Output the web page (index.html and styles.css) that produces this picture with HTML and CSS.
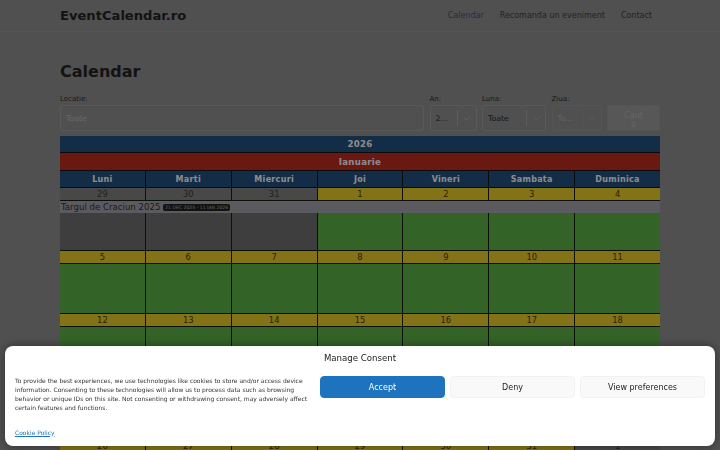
FILE: index.html
```html
<!DOCTYPE html>
<html lang="ro">
<head>
<meta charset="utf-8">
<title>Calendar - EventCalendar.ro</title>
<link rel="stylesheet" href="styles.css">
</head>
<body>
<header class="site-header">
  <div class="container header-inner">
    <a class="logo" href="#">EventCalendar.ro</a>
    <nav class="main-nav">
      <a class="active" href="#">Calendar</a>
      <a href="#">Recomanda un eveniment</a>
      <a href="#">Contact</a>
    </nav>
  </div>
</header>

<main class="container">
  <h1 class="page-title">Calendar</h1>

  <form class="filters">
    <div class="field">
      <label>Locatie:</label>
      <div class="input">Toate</div>
    </div>
    <div class="field">
      <label>An:</label>
      <div class="select"><span class="select-value">2...</span><span class="select-arrow"><svg viewBox="0 0 8 5" width="7" height="5"><path d="M0.5 0.5 L4 4 L7.5 0.5" fill="none" stroke="currentColor" stroke-width="1"/></svg></span></div>
    </div>
    <div class="field">
      <label>Luna:</label>
      <div class="select"><span class="select-value dark">Toate</span><span class="select-arrow"><svg viewBox="0 0 8 5" width="7" height="5"><path d="M0.5 0.5 L4 4 L7.5 0.5" fill="none" stroke="currentColor" stroke-width="1"/></svg></span></div>
    </div>
    <div class="field">
      <label>Ziua:</label>
      <div class="select disabled"><span class="select-value">To...</span><span class="select-arrow"><svg viewBox="0 0 8 5" width="7" height="5"><path d="M0.5 0.5 L4 4 L7.5 0.5" fill="none" stroke="currentColor" stroke-width="1"/></svg></span></div>
    </div>
    <div class="field">
      <label>&nbsp;</label>
      <button type="button" class="search-btn">Cauta</button>
    </div>
  </form>

  <div class="calendar">
    <div class="cal-year">2026</div>
    <div class="cal-month">Ianuarie</div>
    <div class="cal-weekdays">
      <div>Luni</div><div>Marti</div><div>Miercuri</div><div>Joi</div><div>Vineri</div><div>Sambata</div><div>Duminica</div>
    </div>

    <div class="week">
      <div class="num other">29</div><div class="num other">30</div><div class="num other">31</div><div class="num">1</div><div class="num">2</div><div class="num">3</div><div class="num">4</div>
      <div class="day other"></div><div class="day other"></div><div class="day other"></div><div class="day"></div><div class="day"></div><div class="day"></div><div class="day"></div>
      <div class="event-bar">Targul de Craciun 2025 <span class="event-date">21 DEC 2025 - 11 IAN 2026</span></div>
    </div>

    <div class="week">
      <div class="num">5</div><div class="num">6</div><div class="num">7</div><div class="num">8</div><div class="num">9</div><div class="num">10</div><div class="num">11</div>
      <div class="day"></div><div class="day"></div><div class="day"></div><div class="day"></div><div class="day"></div><div class="day"></div><div class="day"></div>
    </div>

    <div class="week">
      <div class="num">12</div><div class="num">13</div><div class="num">14</div><div class="num">15</div><div class="num">16</div><div class="num">17</div><div class="num">18</div>
      <div class="day"></div><div class="day"></div><div class="day"></div><div class="day"></div><div class="day"></div><div class="day"></div><div class="day"></div>
    </div>

    <div class="week">
      <div class="num">19</div><div class="num">20</div><div class="num">21</div><div class="num">22</div><div class="num">23</div><div class="num">24</div><div class="num">25</div>
      <div class="day"></div><div class="day"></div><div class="day"></div><div class="day"></div><div class="day"></div><div class="day"></div><div class="day"></div>
    </div>

    <div class="week">
      <div class="num">26</div><div class="num">27</div><div class="num">28</div><div class="num">29</div><div class="num">30</div><div class="num">31</div><div class="num other">1</div>
      <div class="day"></div><div class="day"></div><div class="day"></div><div class="day"></div><div class="day"></div><div class="day"></div><div class="day other"></div>
    </div>
  </div>
</main>

<div class="backdrop"></div>

<div class="consent" role="dialog" aria-label="Manage Consent">
  <div class="consent-title">Manage Consent</div>
  <p class="consent-message">To provide the best experiences, we use technologies like cookies to store and/or access device information. Consenting to these technologies will allow us to process data such as browsing behavior or unique IDs on this site. Not consenting or withdrawing consent, may adversely affect certain features and functions.</p>
  <div class="consent-buttons">
    <button type="button" class="btn btn-accept">Accept</button>
    <button type="button" class="btn">Deny</button>
    <button type="button" class="btn">View preferences</button>
  </div>
  <div class="consent-links"><a href="#">Cookie Policy</a></div>
</div>
</body>
</html>
```

FILE: styles.css
```css
* { box-sizing: border-box; }

html, body {
  margin: 0;
  padding: 0;
}

body {
  font-family: "DejaVu Sans", "Noto Sans", sans-serif;
  background: #929292;
  color: #242424;
}

a { text-decoration: none; color: inherit; }

.container {
  width: 600px;
  margin: 0 auto;
}

/* top bar */
.site-header {
  border-bottom: 1px solid #9c9c9c;
}

.header-inner {
  height: 31px;
  display: flex;
  align-items: center;
  justify-content: space-between;
}

.logo {
  font-size: 13.1px;
  font-weight: bold;
  color: #242424;
}

.main-nav {
  display: flex;
  gap: 16px;
  font-size: 8px;
  padding-right: 8px;
}

.main-nav a { color: #404040; }
.main-nav a.active { color: #3a5680; }

/* heading */
.page-title {
  margin: 30px 0 0;
  font-size: 16px;
  line-height: 20px;
  font-weight: bold;
  color: #242424;
}

/* filter form */
.filters {
  margin-top: 13px;
  display: grid;
  grid-template-columns: 364px 47px 64px 50px 53px;
  column-gap: 5.5px;
}

.field label {
  display: block;
  font-size: 7px;
  line-height: 9px;
  height: 9px;
  margin-bottom: 1px;
  color: #2e2e2e;
}

.input,
.select {
  height: 26px;
  border: 1px solid #a2a2a2;
  border-radius: 2px;
  background: #939393;
  font-size: 7.8px;
  display: flex;
  align-items: center;
}

.input {
  padding-left: 5px;
  color: #bdbdbd;
}

.select-value {
  flex: 1;
  padding-left: 5px;
  color: #3a3a3a;
  white-space: nowrap;
  overflow: hidden;
}

.select-value.dark { color: #2a2a2a; }

.select-arrow {
  width: 19px;
  height: 16px;
  border-left: 1px solid #a8a8a8;
  display: flex;
  align-items: center;
  justify-content: center;
  color: #b0b0b0;
}

.select.disabled {
  border-color: #9a9a9a;
}

.select.disabled .select-value { color: #b4b4b4; }
.select.disabled .select-arrow { color: #a8a8a8; border-left-color: #9c9c9c; }

.search-btn {
  width: 100%;
  height: 26px;
  padding: 3px 14px 0;
  border: 1px solid #9c9c9c;
  border-radius: 2px;
  background: #9e9e9e;
  color: #b8b8b8;
  font-family: inherit;
  font-size: 8px;
  line-height: 9px;
  word-break: break-all;
}

/* calendar */
.calendar {
  margin-top: 5px;
  color: #fff;
}

.cal-year,
.cal-month {
  text-align: center;
  font-weight: bold;
  font-size: 8.6px;
  border-bottom: 1px solid #141414;
  letter-spacing: 0.3px;
}

.cal-year {
  height: 17px;
  line-height: 17px;
  background: #245380;
}

.cal-month {
  height: 18px;
  line-height: 18px;
  background: #c22d22;
}

.cal-weekdays {
  display: grid;
  grid-template-columns: repeat(7, 1fr);
  column-gap: 1px;
  background: #141414;
  border-bottom: 1px solid #141414;
}

.cal-weekdays div {
  height: 16px;
  line-height: 17px;
  text-align: center;
  font-weight: bold;
  font-size: 8px;
  background: #245380;
  letter-spacing: 0.3px;
}

/* one week: a row of day numbers over a row of day cells */
.week {
  display: grid;
  grid-template-columns: repeat(7, 1fr);
  grid-template-rows: 12px 49px;
  gap: 1px;
  background: #142010;
  border-bottom: 1px solid #142010;
}

.num {
  grid-row: 1;
  background: #f0cf2a;
  color: #4a3c10;
  text-align: center;
  font-size: 8.4px;
  line-height: 12px;
}

.num.other {
  background: #838383;
  color: #3a3a3a;
}

.day {
  grid-row: 2;
  background: #5fb447;
}

.day:nth-child(8)  { grid-column: 1; }
.day:nth-child(9)  { grid-column: 2; }
.day:nth-child(10) { grid-column: 3; }
.day:nth-child(11) { grid-column: 4; }
.day:nth-child(12) { grid-column: 5; }
.day:nth-child(13) { grid-column: 6; }
.day:nth-child(14) { grid-column: 7; }

.day.other { background: #727272; }

.event-bar {
  grid-row: 2;
  grid-column: 1 / -1;
  align-self: start;
  height: 12px;
  background: #a7a7ae;
  color: #2e2e2e;
  font-size: 8.6px;
  line-height: 12px;
  padding-left: 1px;
  white-space: nowrap;
  z-index: 1;
}

.event-date {
  display: inline-block;
  vertical-align: 1px;
  background: #222;
  color: #b8b8b8;
  font-size: 4.6px;
  line-height: 7px;
  padding: 0 2px;
  border-radius: 2px;
}

/* modal backdrop */
.backdrop {
  position: fixed;
  inset: 0;
  background: rgba(0, 0, 0, 0.45);
  z-index: 5;
}

/* cookie consent banner */
.consent {
  position: fixed;
  left: 5px;
  right: 5px;
  bottom: 4px;
  height: 100px;
  z-index: 6;
  background: #fff;
  border-radius: 8px;
  box-shadow: 0 0 10px rgba(0, 0, 0, 0.4);
  padding: 6px 10px 0;
  display: grid;
  grid-template-columns: 295px 1fr;
  grid-template-rows: 12px auto auto;
  column-gap: 10px;
  grid-template-areas:
    "title title"
    "msg btns"
    "links links";
  color: #222;
}

.consent-title {
  grid-area: title;
  text-align: center;
  font-size: 8.6px;
  line-height: 12px;
  color: #222;
}

.consent-message {
  grid-area: msg;
  margin: 12px 0 0;
  font-size: 6px;
  line-height: 9px;
  color: #333;
}

.consent-buttons {
  grid-area: btns;
  margin-top: 12px;
  display: grid;
  grid-template-columns: repeat(3, 1fr);
  gap: 5px;
  align-self: start;
}

.btn {
  height: 22px;
  border: 1px solid #f2f2f2;
  border-radius: 4px;
  background: #f9f9f9;
  color: #222;
  font-family: inherit;
  font-size: 8px;
  padding: 0;
}

.btn-accept {
  background: #1e73be;
  border-color: #1e73be;
  color: #fff;
}

.consent-links {
  grid-area: links;
  margin-top: 7px;
  font-size: 6px;
  line-height: 8px;
}

.consent-links a {
  color: #1e73be;
  text-decoration: underline;
}
```
